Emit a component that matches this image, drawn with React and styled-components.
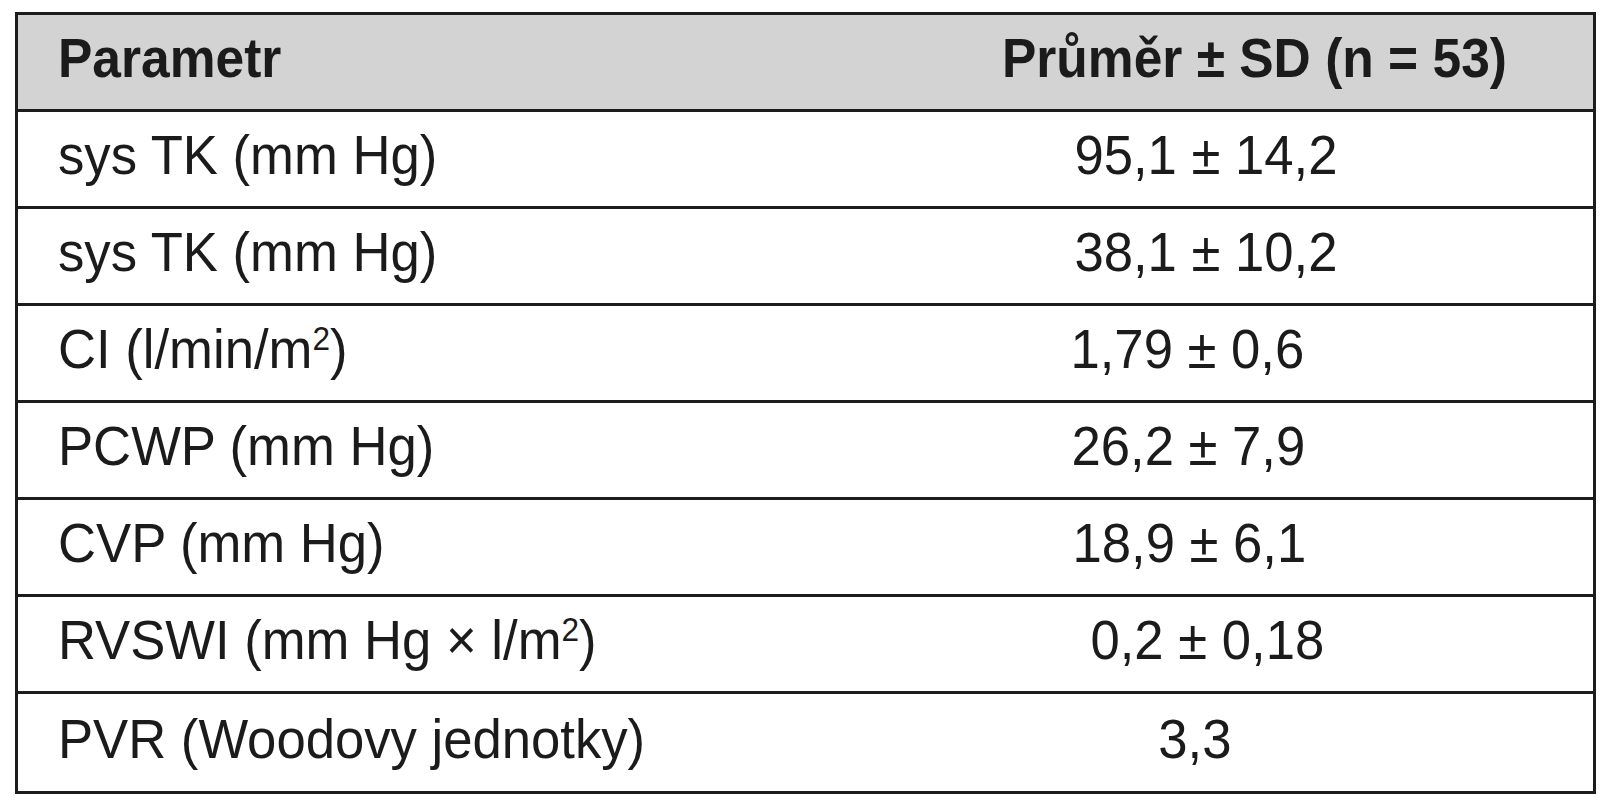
import React from "react";
import styled, { createGlobalStyle } from "styled-components";

const GlobalStyle = createGlobalStyle`
  html, body {
    margin: 0;
    padding: 0;
    background: #ffffff;
  }
  body {
    font-family: "Liberation Sans", Arial, Helvetica, sans-serif;
    color: #1b1b1b;
  }
`;

const Page = styled.div`
  width: 1618px;
  height: 800px;
  padding: 12px 0 0 15px;
  box-sizing: border-box;
  overflow: hidden;
`;

const Table = styled.div`
  width: 1581px;
  border: 3px solid #1c1c1c;
  box-sizing: border-box;
  display: flex;
  flex-direction: column;
`;

const Row = styled.div`
  display: grid;
  grid-template-columns: 760px 1fr;
  height: 97px;
  box-sizing: border-box;
  background: ${(p) => (p.$head ? "#d3d3d3" : "#ffffff")};
  border-bottom: ${(p) => (p.$last ? "none" : "3px solid #1c1c1c")};
`;

const Cell = styled.div`
  display: flex;
  align-items: center;
  justify-content: ${(p) => (p.$center ? "center" : "flex-start")};
  padding: 0 0 9px ${(p) => (p.$center ? 0 : 40)}px;
  font-size: 56px;
  font-weight: ${(p) => (p.$head ? 700 : 400)};
  white-space: nowrap;
`;

const Text = styled.span`
  display: inline-block;
  transform: scaleX(${(p) => (p.$head ? 0.92 : 0.94)});
  transform-origin: ${(p) => (p.$center ? "center" : "left")} center;
  margin-left: ${(p) => p.$shift || 0}px;
`;

const Sup = styled.sup`
  font-size: 0.6em;
  vertical-align: 0.55em;
  line-height: 0;
`;

const rows = [
  { label: <>sys TK (mm Hg)</>, value: "95,1 ± 14,2", shift: 40 },
  { label: <>sys TK (mm Hg)</>, value: "38,1 ± 10,2", shift: 40 },
  { label: <>CI (l/min/m<Sup>2</Sup>)</>, value: "1,79 ± 0,6", shift: 4 },
  { label: <>PCWP (mm Hg)</>, value: "26,2 ± 7,9", shift: 6 },
  { label: <>CVP (mm Hg)</>, value: "18,9 ± 6,1", shift: 8 },
  { label: <>RVSWI (mm Hg × l/m<Sup>2</Sup>)</>, value: "0,2 ± 0,18", shift: 43 },
  { label: <>PVR (Woodovy jednotky)</>, value: "3,3", shift: 19 },
];

export default function App() {
  return (
    <>
      <GlobalStyle />
      <Page>
        <Table>
          <Row $head>
            <Cell $head>
              <Text $head>Parametr</Text>
            </Cell>
            <Cell $head $center>
              <Text $head $center $shift={138}>
                Průměr ± SD (n = 53)
              </Text>
            </Cell>
          </Row>
          {rows.map((r, i) => (
            <Row key={i} $last={i === rows.length - 1}>
              <Cell>
                <Text>{r.label}</Text>
              </Cell>
              <Cell $center>
                <Text $center $shift={r.shift}>
                  {r.value}
                </Text>
              </Cell>
            </Row>
          ))}
        </Table>
      </Page>
    </>
  );
}
